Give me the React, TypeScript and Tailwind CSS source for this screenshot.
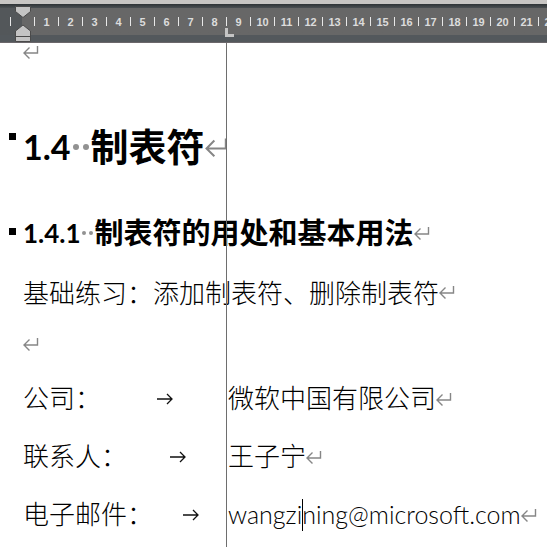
import type { ReactNode } from "react";

const rulerMarks = Array.from({ length: 23 }, (_, i) => i);

function ReturnMark({ large = false }: { large?: boolean }) {
  return (
    <svg
      className={large ? "h-5 w-[23px] shrink-0" : "h-[14px] w-4 shrink-0"}
      viewBox="0 0 16 14"
      fill="none"
      stroke="#868686"
      strokeWidth="1.4"
      aria-hidden="true"
    >
      <path d="M14.5 1v7H1M6.500 2.500L1 8l5.500 5.500" />
    </svg>
  );
}

function TabArrow() {
  return (
    <svg className="h-3 w-4" viewBox="0 0 16 12" fill="none" stroke="#111" strokeWidth="1.3" aria-hidden="true">
      <path d="M0 6h15M10 1l5 5-5 5" />
    </svg>
  );
}

function Ruler() {
  return (
    <header className="relative h-[43px] overflow-hidden border-b border-[#6b676b] bg-[#53585c]">
      <div className="h-1 bg-[#c8c6c4]" />
      <div className="h-1 bg-linear-to-b from-[#2f3437] to-[#4b5053]" />
      <div className="flex h-[27px] items-center bg-linear-to-r from-[#53575a] from-[22px] to-[#676767] to-[22px] pl-[10px]">
        {rulerMarks.map((n) => (
          <div key={n} className="flex w-6 shrink-0 items-center">
            <span className="h-[9px] w-px bg-[#e8e8e8]" />
            <span className="flex-1 text-center font-['Liberation_Sans',Arial,sans-serif] text-[11px] leading-3 font-bold text-[#dcdcdc]">
              {n > 0 ? n : ""}
            </span>
          </div>
        ))}
      </div>
      <svg className="absolute top-[6px] left-[15px] h-9 w-4" viewBox="0 0 16 36" aria-hidden="true">
        <path d="M.5 .5h15v5L8 11.500L.5 5.500z" fill="#c4c4c4" stroke="#4a4a4a" />
        <path d="M8 19l7.500 6v10.500H.5V25z" fill="#c4c4c4" stroke="#4a4a4a" />
        <path d="M.5 30.500h15" stroke="#4a4a4a" />
      </svg>
      <svg className="absolute top-7 left-[225px] h-[9px] w-[9px]" viewBox="0 0 9 9" aria-hidden="true">
        <path d="M0 0h3v6h6v3H0z" fill="#c4c4c4" />
      </svg>
    </header>
  );
}

function TabbedLine({ label, children }: { label: string; children: ReactNode }) {
  return (
    <div className="flex h-[58px] items-center">
      <div className="flex w-[205px] shrink-0 items-center">
        <span className="pb-1">{label}</span>
        <span className="flex flex-1 justify-center">
          <TabArrow />
        </span>
      </div>
      <span className="pb-1">{children}</span>
      <ReturnMark />
    </div>
  );
}

export default function App() {
  return (
    <div className="flex min-h-screen flex-col overflow-hidden bg-white">
      <Ruler />
      <main className="relative flex-1 font-['Noto_Sans_CJK_SC',sans-serif] text-[26px] leading-10 font-light whitespace-nowrap text-black">
        <div className="flex h-[18px] items-center pl-[23px]">
          <ReturnMark />
        </div>
        <div className="mt-8 flex h-[107px] items-center">
          <span className="mr-[7px] mb-5 ml-[9px] size-[7px] bg-black" />
          <h1 className="flex items-center pb-1 text-[38px] font-bold">
            <span className="pt-1 font-['Lato',sans-serif] text-[34px]">1.4</span>
            <span className="flex w-5 justify-center gap-1 pt-1">
              <span className="size-[6px] rounded-full bg-[#929292]" />
              <span className="size-[6px] rounded-full bg-[#929292]" />
            </span>
            制表符
          </h1>
          <ReturnMark large />
        </div>
        <div className="flex h-[66px] items-center">
          <span className="mr-[7px] mb-1 ml-[9px] size-[7px] bg-black" />
          <h2 className="flex items-center pb-1 text-[29px] font-bold">
            <span className="pt-1 font-['Lato',sans-serif] text-[26px]">1.4.1</span>
            <span className="flex w-[14px] justify-center gap-[3px] pt-1">
              <span className="size-1 rounded-full bg-[#929292]" />
              <span className="size-1 rounded-full bg-[#929292]" />
            </span>
            制表符的用处和基本用法
          </h2>
          <ReturnMark />
        </div>
        <div className="pl-[23px]">
          <div className="flex h-[52px] items-center">
            <p>基础练习：添加制表符、删除制表符</p>
            <ReturnMark />
          </div>
          <div className="flex h-[52px] items-center">
            <ReturnMark />
          </div>
          <TabbedLine label="公司：">微软中国有限公司</TabbedLine>
          <TabbedLine label="联系人：">王子宁</TabbedLine>
          <TabbedLine label="电子邮件：">
            <span className="font-['Lato',sans-serif] text-[25px]">
              wangzi
              <span className="relative">
                <span className="absolute top-0 left-0 h-8 w-px bg-black" />
              </span>
              ning@microsoft.com
            </span>
          </TabbedLine>
        </div>
        <div className="absolute inset-y-0 left-[226px] w-px bg-[#6e6e6e]" />
      </main>
    </div>
  );
}
